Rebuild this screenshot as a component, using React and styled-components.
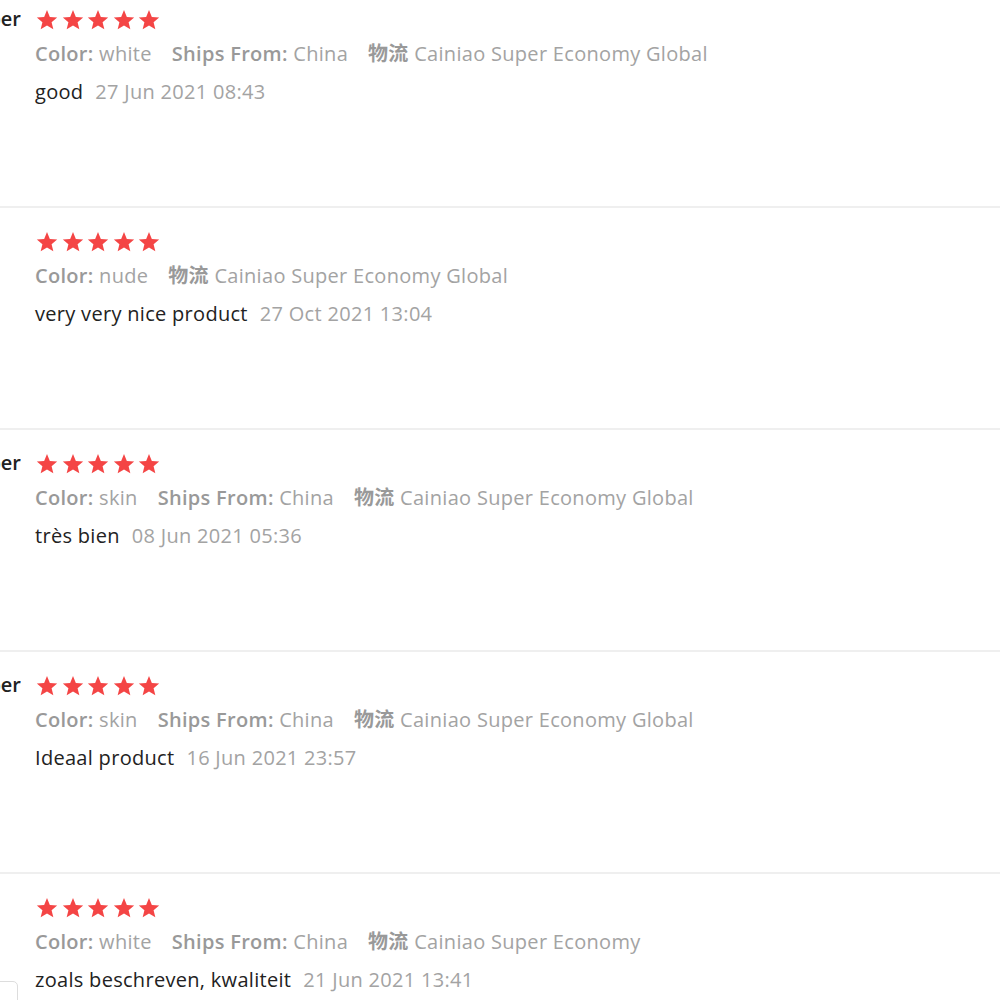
import styled, { createGlobalStyle } from 'styled-components';

const GlobalStyle = createGlobalStyle`
    html, body {
        margin: 0;
        padding: 0;
        background: #fff;
        overflow: hidden;
    }
    body {
        font-family: "Open Sans", "Noto Sans CJK SC", sans-serif;
    }
`;

const List = styled.div`
    margin-top: -16px;
`;

const Review = styled.div`
    height: 220px;
    box-sizing: content-box;
    border-top: 2px solid #efefef;
    display: flex;
    gap: 14px;
`;

const NameCol = styled.div`
    width: 21px;
    flex-shrink: 0;
    overflow: hidden;
    display: flex;
    flex-direction: column;
    align-items: flex-end;
    padding-top: 21px;
`;

const UserName = styled.div`
    white-space: nowrap;
    font-size: 20px;
    font-weight: 600;
    color: #222;
    line-height: 24px;
`;

const Thumb = styled.div`
    margin-top: 86px;
    align-self: flex-start;
    width: 40px;
    height: 40px;
    margin-left: -24px;
    border: 1px solid #ddd;
    border-radius: 5px;
`;

const Content = styled.div`
    display: flex;
    flex-direction: column;
    padding-top: 22px;
`;

const Stars = styled.div`
    display: flex;
    gap: 3.5px;
    height: 24px;
    align-items: center;
    margin-left: 1px;
`;

const Meta = styled.div`
    margin-top: 9px;
    display: flex;
    font-size: 20px;
    letter-spacing: 0.3px;
    line-height: 26px;
    color: #a3a3a3;
    white-space: nowrap;
`;

const MetaItem = styled.span`
    margin-right: 20px;
`;

const Label = styled.b`
    font-weight: 600;
    color: #999;
`;

const Body = styled.div`
    margin-top: 12px;
    font-size: 20px;
    letter-spacing: 0.3px;
    line-height: 26px;
    color: #222;
    white-space: nowrap;
`;

const Date = styled.span`
    margin-left: 12px;
    color: #a3a3a3;
`;

const Star = () => (
    <svg width="22" height="22" viewBox="0 0 24 24">
        <path
            fill="#f44545"
            d="M12 1.2l3.1 7.4 8 .6-6.1 5.2 1.9 7.8L12 18l-6.9 4.2 1.9-7.8L.9 9.2l8-.6z"
        />
    </svg>
);

const reviews = [
    { name: 'AliExpress Shopper', color: 'white', ships: 'China', logistics: 'Cainiao Super Economy Global', text: 'good', date: '27 Jun 2021 08:43' },
    { name: '', color: 'nude', ships: null, logistics: 'Cainiao Super Economy Global', text: 'very very nice product', date: '27 Oct 2021 13:04' },
    { name: 'AliExpress Shopper', color: 'skin', ships: 'China', logistics: 'Cainiao Super Economy Global', text: 'très bien', date: '08 Jun 2021 05:36' },
    { name: 'AliExpress Shopper', color: 'skin', ships: 'China', logistics: 'Cainiao Super Economy Global', text: 'Ideaal product', date: '16 Jun 2021 23:57' },
    { name: '', color: 'white', ships: 'China', logistics: 'Cainiao Super Economy', text: 'zoals beschreven, kwaliteit', date: '21 Jun 2021 13:41', thumb: true },
];

export default function App() {
    return (
        <>
            <GlobalStyle />
            <List>
                {reviews.map((r, i) => (
                    <Review key={i}>
                        <NameCol>
                            {r.name && <UserName>{r.name}</UserName>}
                            {r.thumb && <Thumb />}
                        </NameCol>
                        <Content>
                            <Stars>
                                {[0, 1, 2, 3, 4].map((s) => (
                                    <Star key={s} />
                                ))}
                            </Stars>
                            <Meta>
                                <MetaItem>
                                    <Label>Color:</Label> {r.color}
                                </MetaItem>
                                {r.ships && (
                                    <MetaItem>
                                        <Label>Ships From:</Label> {r.ships}
                                    </MetaItem>
                                )}
                                <MetaItem>
                                    <Label>物流</Label> {r.logistics}
                                </MetaItem>
                            </Meta>
                            <Body>
                                {r.text}
                                <Date>{r.date}</Date>
                            </Body>
                        </Content>
                    </Review>
                ))}
            </List>
        </>
    );
}
